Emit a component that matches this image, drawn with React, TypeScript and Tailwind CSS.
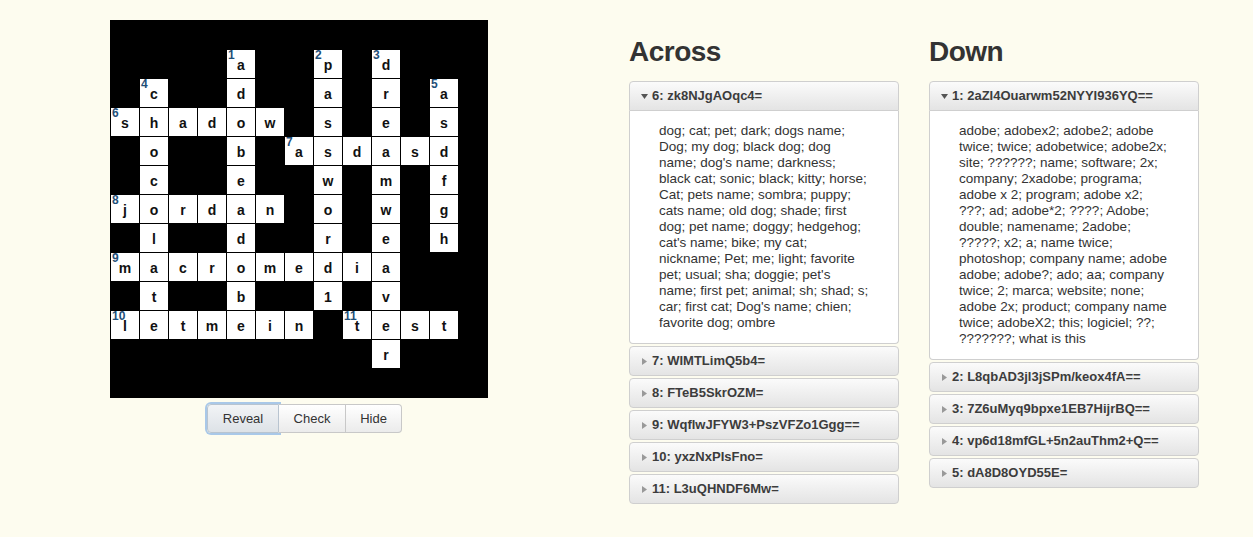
const grid = [
  "#############",
  "####a##p#d###",
  "#c##d##a#r#a#",
  "shadow#s#e#s#",
  "#o##b#asdasd#",
  "#c##e##w#m#f#",
  "jordan#o#w#g#",
  "#l##d##r#e#h#",
  "macromedia###",
  "#t##b##1#v###",
  "letmein#test#",
  "#########r###",
  "#############",
]

const numbers: Record<string, number> = {
  "1-4": 1,
  "1-7": 2,
  "1-9": 3,
  "2-1": 4,
  "2-11": 5,
  "3-0": 6,
  "4-6": 7,
  "6-0": 8,
  "8-0": 9,
  "10-0": 10,
  "10-8": 11,
}

type Clue = { title: string; lines?: string[] }

const across: Clue[] = [
  {
    title: "6: zk8NJgAOqc4=",
    lines: [
      "dog; cat; pet; dark; dogs name;",
      "Dog; my dog; black dog; dog",
      "name; dog's name; darkness;",
      "black cat; sonic; black; kitty; horse;",
      "Cat; pets name; sombra; puppy;",
      "cats name; old dog; shade; first",
      "dog; pet name; doggy; hedgehog;",
      "cat's name; bike; my cat;",
      "nickname; Pet; me; light; favorite",
      "pet; usual; sha; doggie; pet's",
      "name; first pet; animal; sh; shad; s;",
      "car; first cat; Dog's name; chien;",
      "favorite dog; ombre",
    ],
  },
  { title: "7: WIMTLimQ5b4=" },
  { title: "8: FTeB5SkrOZM=" },
  { title: "9: WqflwJFYW3+PszVFZo1Ggg==" },
  { title: "10: yxzNxPIsFno=" },
  { title: "11: L3uQHNDF6Mw=" },
]

const down: Clue[] = [
  {
    title: "1: 2aZI4Ouarwm52NYYI936YQ==",
    lines: [
      "adobe; adobex2; adobe2; adobe",
      "twice; twice; adobetwice; adobe2x;",
      "site; ??????; name; software; 2x;",
      "company; 2xadobe; programa;",
      "adobe x 2; program; adobe x2;",
      "???; ad; adobe*2; ????; Adobe;",
      "double; namename; 2adobe;",
      "?????; x2; a; name twice;",
      "photoshop; company name; adobe",
      "adobe; adobe?; ado; aa; company",
      "twice; 2; marca; website; none;",
      "adobe 2x; product; company name",
      "twice; adobeX2; this; logiciel; ??;",
      "???????; what is this",
    ],
  },
  { title: "2: L8qbAD3jl3jSPm/keox4fA==" },
  { title: "3: 7Z6uMyq9bpxe1EB7HijrBQ==" },
  { title: "4: vp6d18mfGL+5n2auThm2+Q==" },
  { title: "5: dA8D8OYD55E=" },
]

function Arrow({ open }: { open: boolean }) {
  return open ? (
    <svg width="7" height="5" viewBox="0 0 7 5" className="mr-[4px]">
      <path d="M0 0h7L3.5 5z" fill="#555" />
    </svg>
  ) : (
    <svg width="5" height="7" viewBox="0 0 5 7" className="mr-[5px] ml-[1px]">
      <path d="M0 0v7l5-3.5z" fill="#999" />
    </svg>
  )
}

function ClueList({ heading, clues }: { heading: string; clues: Clue[] }) {
  return (
    <div className="w-[270px]">
      <h2 className="text-[28px] font-bold text-[#333] leading-none tracking-[-0.5px] pt-[38px] pb-[15px]">
        {heading}
      </h2>
      <div className="flex flex-col gap-[2px]">
        {clues.map((c) => {
          const open = !!c.lines
          return (
            <div key={c.title}>
              <div
                className={`flex items-center h-[30px] pl-[11px] border border-[#cfcfcf] bg-gradient-to-b from-[#fbfbfb] to-[#e4e4e4] text-[13px] font-bold text-[#3c3c3c] ${
                  open ? "rounded-t-[4px]" : "rounded-[4px]"
                }`}
              >
                <Arrow open={open} />
                <span>{c.title}</span>
              </div>
              {open && (
                <div className="border border-t-0 border-[#cfcfcf] rounded-b-[4px] bg-white pl-[29px] py-[12px] text-[13.5px] leading-[16px] text-[#333]">
                  {c.lines!.map((l, i) => (
                    <div key={i} className="whitespace-nowrap">
                      {l}
                    </div>
                  ))}
                </div>
              )}
            </div>
          )
        })}
      </div>
    </div>
  )
}

export default function App() {
  return (
    <div
      className="min-h-[537px] w-full bg-[#fdfcef] flex"
      style={{ fontFamily: '"Liberation Sans", Arial, sans-serif' }}
    >
      <div className="pl-[110px] pt-[20px] w-[629px] shrink-0">
        <div className="grid grid-cols-[repeat(13,28px)] gap-[1px] p-[1px] bg-black w-[378px]">
          {grid.map((row, r) =>
            row.split("").map((ch, c) => {
              const num = numbers[`${r}-${c}`]
              if (ch === "#") return <div key={`${r}-${c}`} className="h-[28px] bg-black" />
              return (
                <div
                  key={`${r}-${c}`}
                  className="relative h-[28px] bg-white flex items-center justify-center pt-[2px] text-[14px] font-bold text-[#111]"
                >
                  {num && (
                    <span className="absolute left-[1px] top-[-1px] text-[12px] font-bold text-[#1f4f78] leading-none">
                      {num}
                    </span>
                  )}
                  {ch}
                </div>
              )
            })
          )}
        </div>
        <div className="flex mt-[6px] ml-[97px] text-[13px] text-[#333]">
          <button className="w-[72px] h-[29px] border border-[#b8c4d0] rounded-l-[4px] bg-gradient-to-b from-[#f2f4f6] to-[#dde2e7] shadow-[0_0_0_2px_#a9c8e8]">
            Reveal
          </button>
          <button className="w-[67px] h-[29px] border border-l-0 border-[#c8c8c8] bg-gradient-to-b from-[#ffffff] to-[#ebebeb]">
            Check
          </button>
          <button className="w-[56px] h-[29px] border border-l-0 border-[#c8c8c8] rounded-r-[4px] bg-gradient-to-b from-[#ffffff] to-[#ebebeb]">
            Hide
          </button>
        </div>
      </div>
      <div className="flex gap-[30px]">
        <ClueList heading="Across" clues={across} />
        <ClueList heading="Down" clues={down} />
      </div>
    </div>
  )
}
